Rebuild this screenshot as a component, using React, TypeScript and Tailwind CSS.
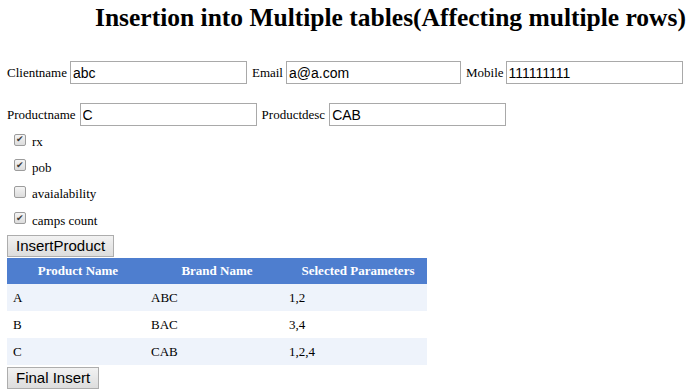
import React from "react";

const serif = { fontFamily: '"Liberation Serif", "Times New Roman", serif' };
const sans = { fontFamily: '"Liberation Sans", Arial, sans-serif' };

const Field = ({ label, value, width = "w-[177px]", className = "", gap = "ml-[3px]" }: { label: string; value: string; width?: string; className?: string; gap?: string }) => (
  <div className={`flex items-center ${className}`}>
    <span className="text-[13px] text-black">{label}</span>
    <input
      readOnly
      value={value}
      style={sans}
      className={`${gap} h-[23px] ${width} border border-[#a9a9a9] px-[2px] text-[14px] text-black outline-none`}
    />
  </div>
);

const Check = ({ label, checked, h = "h-[26px]" }: { label: string; checked: boolean; h?: string }) => (
  <div className={`flex ${h} items-center pl-[14px]`}>
    <span className="flex h-[12px] w-[12px] items-center justify-center rounded-[2px] border border-[#9c9c9c] bg-gradient-to-b from-[#f4f4f4] to-[#dcdcdc] text-[9px] leading-none text-[#3a3a3a]">
      {checked ? "✔" : ""}
    </span>
    <span className="ml-[6px] pt-[5px] text-[13px] text-black">{label}</span>
  </div>
);

const Btn = ({ children }: { children: React.ReactNode }) => (
  <button
    style={sans}
    className="h-[22px] border border-[#adadad] bg-gradient-to-b from-[#f2f2f2] to-[#dddddd] px-[8px] text-[15px] leading-none text-black"
  >
    {children}
  </button>
);

const rows = [
  { p: "A", b: "ABC", s: "1,2" },
  { p: "B", b: "BAC", s: "3,4" },
  { p: "C", b: "CAB", s: "1,2,4" },
];

export default function App() {
  return (
    <div style={serif} className="h-[392px] w-[690px] overflow-hidden bg-white text-black">
      <h1 className="whitespace-nowrap pl-[95px] pt-[1px] text-[25.5px] font-bold leading-[34px]">
        Insertion into Multiple tables(Affecting multiple rows)
      </h1>

      <div className="mt-[26px] flex pl-[7px]">
        <Field label="Clientname" value="abc" />
        <Field label="Email" value="a@a.com" width="w-[175px]" className="ml-[5px]" />
        <Field label="Mobile" value="111111111" className="ml-[5px]" gap="ml-[2px]" />
      </div>

      <div className="mt-[19px] flex pl-[7px]">
        <Field label="Productname" value="C" gap="ml-[4px]" />
        <Field label="Productdesc" value="CAB" className="ml-[5px]" gap="ml-[4px]" />
      </div>

      <div className="mt-[1px] flex flex-col">
        <Check label="rx" checked h="h-[25px]" />
        <Check label="pob" checked />
        <Check label="avaialability" checked={false} h="h-[27px]" />
        <Check label="camps count" checked />
      </div>

      <div className="mt-[3px] pl-[7px]">
        <Btn>InsertProduct</Btn>
      </div>

      <table className="ml-[7px] w-[420px] border-collapse text-[13px]">
        <thead>
          <tr className="h-[26px] bg-[#4e7ecf] text-white">
            <th className="w-[138px] pl-[4px] font-bold">Product Name</th>
            <th className="w-[138px] pl-[6px] font-bold">Brand Name</th>
            <th className="pl-[6px] font-bold">Selected Parameters</th>
          </tr>
        </thead>
        <tbody>
          {rows.map((r, i) => (
            <tr key={r.p} className={`h-[27px] ${i % 2 === 0 ? "bg-[#eef3fb]" : "bg-white"}`}>
              <td className="pl-[6px]">{r.p}</td>
              <td className="pl-[6px]">{r.b}</td>
              <td className="pl-[6px]">{r.s}</td>
            </tr>
          ))}
        </tbody>
      </table>

      <div className="mt-[1px] pl-[7px]">
        <Btn>Final Insert</Btn>
      </div>
    </div>
  );
}
